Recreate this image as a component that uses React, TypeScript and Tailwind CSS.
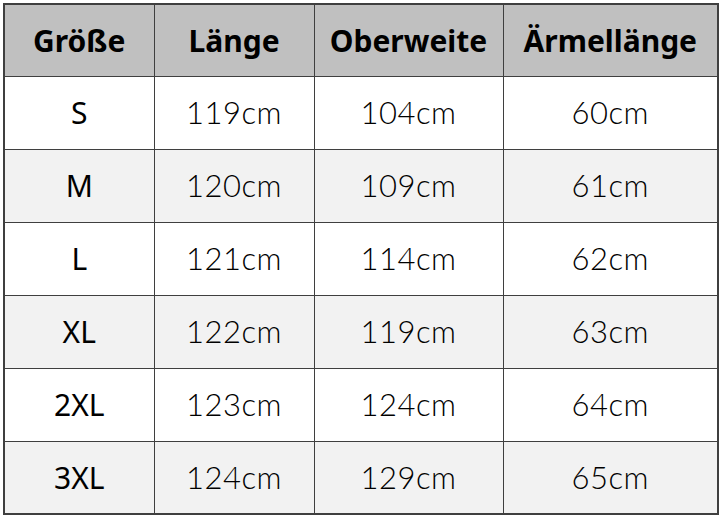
// Size chart table
const headers = ["Größe", "Länge", "Oberweite", "Ärmellänge"];

const rows = [
  ["S", "119cm", "104cm", "60cm"],
  ["M", "120cm", "109cm", "61cm"],
  ["L", "121cm", "114cm", "62cm"],
  ["XL", "122cm", "119cm", "63cm"],
  ["2XL", "123cm", "124cm", "64cm"],
  ["3XL", "124cm", "129cm", "65cm"],
];

const widths = ["w-[150px]", "w-[160px]", "w-[189px]", "w-[215px]"];

export default function App() {
  return (
    <div className="w-[720px] h-[519px] bg-white pt-[3px] pl-[3px]">
      <table className="border-collapse border-2 border-[#3f3f3f] text-black">
        <thead>
          <tr className="bg-[#c0c0c0] h-[72px]">
            {headers.map((h, i) => (
              <th
                key={h}
                className={`${widths[i]} border border-[#3f3f3f] text-[30px] font-bold font-['Noto_Sans',sans-serif] text-center`}
              >
                {h}
              </th>
            ))}
          </tr>
        </thead>
        <tbody>
          {rows.map((r, ri) => (
            <tr key={r[0]} className={`h-[73px] ${ri % 2 === 1 ? "bg-[#f2f2f2]" : "bg-white"}`}>
              {r.map((c, ci) => (
                <td
                  key={ci}
                  className={`border border-[#3f3f3f] text-center ${
                    ci === 0
                      ? "text-[30px] font-['Noto_Sans',sans-serif]"
                      : "text-[31px] font-light tracking-[0.5px] font-['Lato',sans-serif] text-black"
                  }`}
                >
                  {c}
                </td>
              ))}
            </tr>
          ))}
        </tbody>
      </table>
    </div>
  );
}
